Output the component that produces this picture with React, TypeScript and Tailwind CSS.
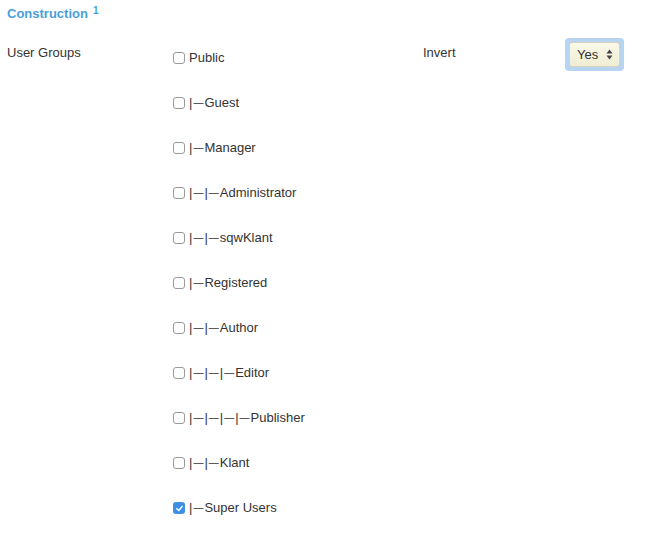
import React from "react";

const groups: { depth: number; name: string; checked?: boolean }[] = [
  { depth: 0, name: "Public" },
  { depth: 1, name: "Guest" },
  { depth: 1, name: "Manager" },
  { depth: 2, name: "Administrator" },
  { depth: 2, name: "sqwKlant" },
  { depth: 1, name: "Registered" },
  { depth: 2, name: "Author" },
  { depth: 3, name: "Editor" },
  { depth: 4, name: "Publisher" },
  { depth: 2, name: "Klant" },
  { depth: 1, name: "Super Users", checked: true },
];

function Box({ checked }: { checked?: boolean }) {
  if (checked) {
    return (
      <span className="flex h-[12px] w-[12px] shrink-0 items-center justify-center rounded-[3px] bg-[#3d8fe6]">
        <svg width="9" height="9" viewBox="0 0 10 10">
          <path d="M2 5.2 L4.2 7.3 L8 2.6" fill="none" stroke="#fff" strokeWidth="1.6" strokeLinecap="round" strokeLinejoin="round" />
        </svg>
      </span>
    );
  }
  return <span className="h-[12px] w-[12px] shrink-0 rounded-[3px] border border-[#9a9a9a] bg-white" />;
}

function Prefix({ depth }: { depth: number }) {
  return (
    <>
      {Array.from({ length: depth }).map((_, i) => (
        <React.Fragment key={i}>
          <span>|</span>
          <span className="relative top-[-1px] mx-[1px] text-[10px]">—</span>
        </React.Fragment>
      ))}
    </>
  );
}

export default function App() {
  return (
    <div className="h-[554px] w-[660px] bg-white pl-[7px] text-[13px] text-[#333] [font-family:'Liberation_Sans',Arial,sans-serif]">
      <div className="pt-[5px] leading-[18px]">
        <span className="font-bold text-[#4a9fdb]">Construction</span>
        <sup className="relative top-[-4px] ml-[5px] text-[10px] font-bold text-[#4a9fdb]">1</sup>
      </div>
      <div className="mt-[21px] flex">
        <div className="w-[166px] leading-[18px]">User Groups</div>
        <div className="w-[250px] pt-[3px]">
          <div className="flex flex-col gap-[23px]">
            {groups.map((g) => (
              <label key={g.name} className="flex h-[22px] items-center gap-[4px]">
                <Box checked={g.checked} />
                <span className="flex items-baseline">
                  <Prefix depth={g.depth} />
                  <span>{g.name}</span>
                </span>
              </label>
            ))}
          </div>
        </div>
        <div className="w-[142px] leading-[18px]">Invert</div>
        <div className="-mt-[6px]">
          <div className="rounded-[4px] bg-[#b7d4f2] p-[4px]">
            <div className="flex h-[25px] w-[51px] items-center justify-between rounded-[3px] border border-[#d6d3bf] bg-gradient-to-b from-[#faf8e8] to-[#f0edd4] pl-[7px] pr-[6px]">
              <span>Yes</span>
              <svg width="7" height="11" viewBox="0 0 7 11">
                <path d="M3.5 0.5 L6.5 4.5 L0.5 4.5 Z" fill="#444" />
                <path d="M3.5 10.5 L6.5 6.5 L0.5 6.5 Z" fill="#444" />
              </svg>
            </div>
          </div>
        </div>
      </div>
    </div>
  );
}
